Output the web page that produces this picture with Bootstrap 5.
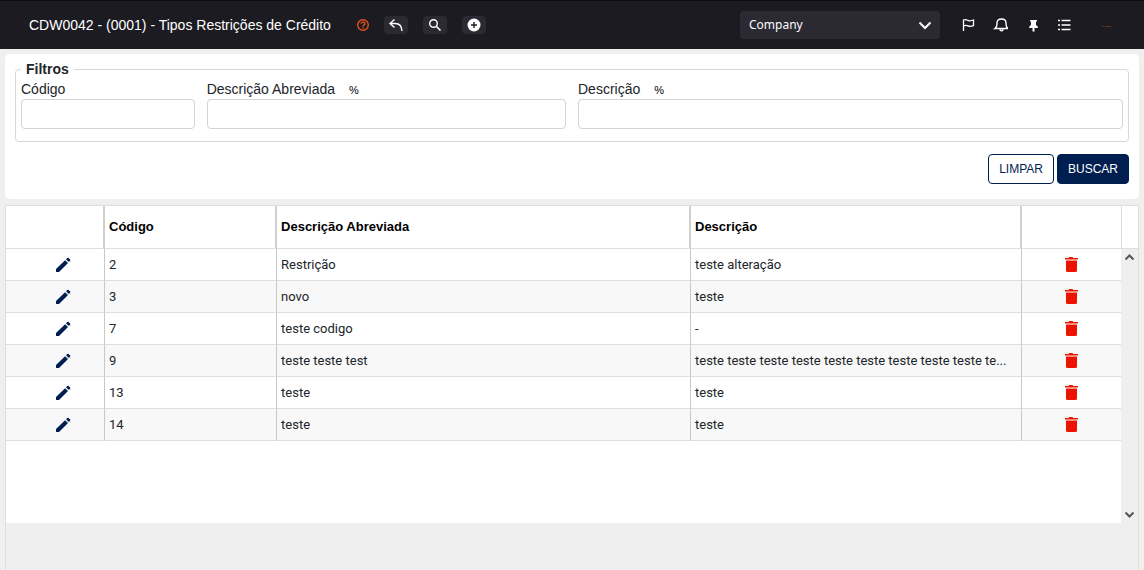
<!DOCTYPE html>
<html lang="pt-BR">
<head>
<meta charset="utf-8">
<meta name="viewport" content="width=device-width, initial-scale=1">
<title>Tipos Restrições de Crédito</title>
<link href="https://cdn.jsdelivr.net/npm/bootstrap@5.3.0/dist/css/bootstrap.min.css" rel="stylesheet">
<style>
  body { background: #efefef; font-family: "Liberation Sans", Arial, sans-serif; font-size: 14px; line-height: 20px; color: #212529; }
  .topbar { background: #1c1b22; border-top: 1px solid #0c0c0d; height: 49px; padding: 0 28px 0 29px; color: #fff; }
  .page-title { font-size: 14px; line-height: 20px; font-weight: 400; margin: 0 22px 0 0; }
  .tools { gap: 15px; }
  .tool-btn { background: #2b2a33; border: 0; border-radius: 4px; width: 24px; height: 18px; padding: 0; color: #fff; display: flex; align-items: center; justify-content: center; }
  .plain-btn { background: none; border: 0; padding: 0; width: 16px; height: 16px; color: #fff; display: flex; }
  .company { width: 200px; height: 28px; padding: 0 32px 0 9px; border: 0; border-radius: 4px; background-color: #2b2a33; color: #fbfbfe; font: 12px/28px "Noto Sans", sans-serif;
    --bs-form-select-bg-img: url("data:image/svg+xml,%3csvg xmlns='http://www.w3.org/2000/svg' viewBox='0 0 14 14'%3e%3cpath fill='none' stroke='white' stroke-width='2' d='M1.500 4.500L7 10l5.500-5.500'/%3e%3c/svg%3e");
    background-image: var(--bs-form-select-bg-img), none; background-size: 14px 14px; background-position: right 8px center; }
  .panel { background: #fff; border-radius: 5px; margin: 5px 5px 6px; padding: 5px 10px 15px; }
  .filters { position: relative; padding: 0 0 13px; }
  .filters::before { content: ""; position: absolute; inset: -10px 0 0; border: 1px solid #d5d8da; border-radius: 4px; pointer-events: none; }
  .filters legend { position: relative; z-index: 1; float: none; width: auto; margin: 0 0 0 6px; padding: 0 5px; background: #fff; font-size: 14px; line-height: 20px; font-weight: 700; }
  .field { padding: 0 6px; }
  .field label { display: block; height: 20px; line-height: 20px; }
  .pct { font-size: 11px; color: #000; margin-left: 14px; }
  .filters .form-control { position: relative; height: 30px; padding: 4px 8px; font-size: 14px; border-color: #ced4da; border-radius: 4px; }
  .actions { margin-top: 12px; gap: 3px; }
  .act { height: 30px; padding: 0 10px; font-size: 12px; line-height: 28px; border-radius: 4px; border-color: #001e50; }
  .act-line { color: #001e50; background: #fff; }
  .act-fill { color: #fff; background: #001e50; }
  .grid-box { margin: 0 5px; border: 1px solid #dedede; border-bottom: 0; min-height: calc(100vh - 205px); }
  .grid-main { height: 317px; background: #fff; }
  .grid-table { width: 100%; table-layout: fixed; border-collapse: separate; border-spacing: 0; font-family: Roboto, sans-serif; font-size: 13px; line-height: 20px; color: #212529; }
  .grid-table th { height: 43px; padding: 0 4px; color: #000; font-family: "Liberation Sans", Arial, sans-serif; font-weight: 700; border-bottom: 1px solid #dedede; border-right: 2px solid #d0d0d0; }
  .grid-table td { height: 32px; padding: 0 8px 0 4px; border-bottom: 1px solid #dedede; border-right: 1px solid #c8c8c8; white-space: nowrap; overflow: hidden; text-overflow: ellipsis; }
  .grid-table th:last-child, .grid-table td:last-child { border-right: 0; }
  .grid-table tbody tr:nth-child(even) { background: #f8f8f8; }
  .grid-table .cell-edit { padding: 0 0 0 16px; }
  .grid-table .cell-del { padding: 0; }
  .col-act { width: 99px; } .col-code { width: 15.43%; } .col-short { width: 37.13%; } .col-desc { width: 29.69%; }
  .icon-btn { background: none; border: 0; padding: 0; display: block; width: 18px; height: 18px; margin: 0 auto; }
  .icon-btn svg, .plain-btn svg, .tool-btn svg, .rail svg { display: block; }
  .edit { color: #001e50; }
  .del { color: #eb1400; }
  .rail { width: 17px; flex: none; background: #efefef; }
  .rail-head { height: 43px; background: #fff; border-left: 1px solid #dedede; border-bottom: 1px solid #dedede; }
  .rail button { border: 0; background: none; padding: 0; height: 17px; width: 17px; }
</style>
</head>
<body>
<header class="topbar d-flex align-items-center">
  <h1 class="page-title">CDW0042 - (0001) - Tipos Restrições de Crédito</h1>
  <div class="tools d-flex align-items-center">
    <button class="plain-btn" aria-label="Ajuda"><svg width="16" height="16" viewBox="0 0 16 16" fill="none" stroke="#e8501e" stroke-width="1.4"><circle cx="10" cy="8" r="5.300"/><path d="M8.200 6.700a1.800 1.700 0 1 1 2.700 1.500q-.9.500-.9 1.300M10 10.300v1.300"/></svg></button>
    <button class="tool-btn" aria-label="Voltar"><svg width="16" height="16" viewBox="0 0 16 16" fill="none" stroke="#fff" stroke-width="1.4"><path d="M6.500 2.500L2 6.500l4.500 4M2 6.500h5.500q6 0 6.500 7.500"/></svg></button>
    <button class="tool-btn" aria-label="Pesquisar"><svg width="14" height="14" viewBox="0 0 14 14" fill="none" stroke="#fff"><circle cx="5.500" cy="5.500" r="3.800" stroke-width="1.400"/><path d="M8.500 8.500l4 4" stroke-width="1.700"/></svg></button>
    <button class="tool-btn" aria-label="Adicionar"><svg width="14" height="14" viewBox="0 0 14 14"><circle cx="7" cy="7" r="6.500" fill="#fff"/><path d="M7 4v6M4 7h6" stroke="#1c1b22" stroke-width="1.400"/></svg></button>
  </div>
  <select class="form-select company ms-auto" aria-label="Empresa"><option>Company</option></select>
  <nav class="d-flex align-items-center ms-3" aria-label="Atalhos">
    <button class="plain-btn ms-1 me-3" aria-label="Marcar"><svg width="16" height="16" viewBox="0 0 16 16" fill="none" stroke="#fff" stroke-width="1.3"><path d="M3.500 14V2.500M3.500 3q2-.8 4 .3t6-.3v5.700q-3.500 1.300-5.500.2T3.500 9"/></svg></button>
    <button class="plain-btn me-3" aria-label="Notificações"><svg width="16" height="16" viewBox="0 0 16 16" fill="none" stroke="#fff" stroke-width="1.4"><path d="M3.500 11.500h13q-2-1.500-2-4.500V6q0-4-4.500-4T5.500 6v1q0 3-2 4.500z" transform="translate(-.5 0)"/><path d="M8 12q0 1.800 1.500 1.800T11 12"/></svg></button>
    <button class="plain-btn me-3" aria-label="Fixar"><svg width="16" height="16" viewBox="0 0 16 16" fill="#fff"><path d="M6 3h7v1.500h-1V8q2 1 2 3h-3.500v3.500h-2V11H5q0-2 2-3V4.500H6z"/></svg></button>
    <button class="plain-btn" aria-label="Menu"><svg width="16" height="16" viewBox="0 0 16 16" stroke="#fff" stroke-width="1.700"><path d="M2 3.500h2M2 8h2M2 12.500h2M5.500 3.500h9M5.500 8h9M5.500 12.500h9"/></svg></button>
    <svg class="ms-4" width="20" height="16" viewBox="0 0 20 16" aria-hidden="true"><path d="M6 9.500h5" stroke="#64261b"/><path d="M11 9.500h4" stroke="#4c4020"/></svg>
  </nav>
</header>
<main>
  <form class="panel" onsubmit="return false">
    <fieldset class="filters">
      <legend>Filtros</legend>
      <div class="row g-0">
        <div class="col-2 field"><label for="cod">Código</label><input id="cod" class="form-control"></div>
        <div class="col-4 field"><label for="abr">Descrição Abreviada<span class="pct">%</span></label><input id="abr" class="form-control"></div>
        <div class="col-6 field"><label for="des">Descrição<span class="pct">%</span></label><input id="des" class="form-control"></div>
      </div>
    </fieldset>
    <div class="actions d-flex justify-content-end">
      <button type="reset" class="btn act act-line">LIMPAR</button>
      <button type="submit" class="btn act act-fill">BUSCAR</button>
    </div>
  </form>
  <section class="grid-box">
    <div class="grid-main d-flex">
      <div class="flex-grow-1 overflow-hidden">
        <table class="grid-table">
          <colgroup><col class="col-act"><col class="col-code"><col class="col-short"><col class="col-desc"><col></colgroup>
          <thead><tr><th></th><th scope="col">Código</th><th scope="col">Descrição Abreviada</th><th scope="col">Descrição</th><th></th></tr></thead>
          <tbody id="rows"></tbody>
        </table>
      </div>
      <div class="rail d-flex flex-column">
        <div class="rail-head"></div>
        <button aria-label="Subir"><svg width="17" height="17" viewBox="0 0 17 17" fill="none" stroke="#555" stroke-width="2"><path d="M4.500 10.500l4-4 4 4"/></svg></button>
        <button class="mt-auto" aria-label="Descer"><svg width="17" height="17" viewBox="0 0 17 17" fill="none" stroke="#555" stroke-width="2"><path d="M4.500 6.500l4 4 4-4"/></svg></button>
      </div>
    </div>
  </section>
</main>
<script>
  const data = [
    ["2", "Restrição", "teste alteração"],
    ["3", "novo", "teste"],
    ["7", "teste codigo", "-"],
    ["9", "teste teste test", "teste teste teste teste teste teste teste teste teste te..."],
    ["13", "teste", "teste"],
    ["14", "teste", "teste"]
  ];
  const pencil = '<svg width="18" height="18" viewBox="0 0 18 18" fill="currentColor"><path d="M2 16v-2.900L11.100 4.200l2.900 2.900L5 16zM12 3.300l1.400-1.300q.6-.5 1.200 0l1.500 1.500q.5.600 0 1.200l-1.300 1.400z"/></svg>';
  const trash = '<svg width="18" height="18" viewBox="0 0 18 18" fill="currentColor"><path d="M3 2h3.500l1-1h3l1 1H16v1.500H3zM4 4.500h11V14.500q0 1.500-1.500 1.500h-8Q4 16 4 14.500z"/></svg>';
  document.getElementById("rows").innerHTML = data.map(r =>
    `<tr><td class="cell-edit"><button class="icon-btn edit" aria-label="Editar ${r[0]}">${pencil}</button></td>` +
    r.map(v => `<td>${v}</td>`).join("") +
    `<td class="cell-del"><button class="icon-btn del" aria-label="Excluir ${r[0]}">${trash}</button></td></tr>`).join("");
</script>
<script src="https://cdn.jsdelivr.net/npm/bootstrap@5.3.0/dist/js/bootstrap.bundle.min.js"></script>
</body>
</html>
